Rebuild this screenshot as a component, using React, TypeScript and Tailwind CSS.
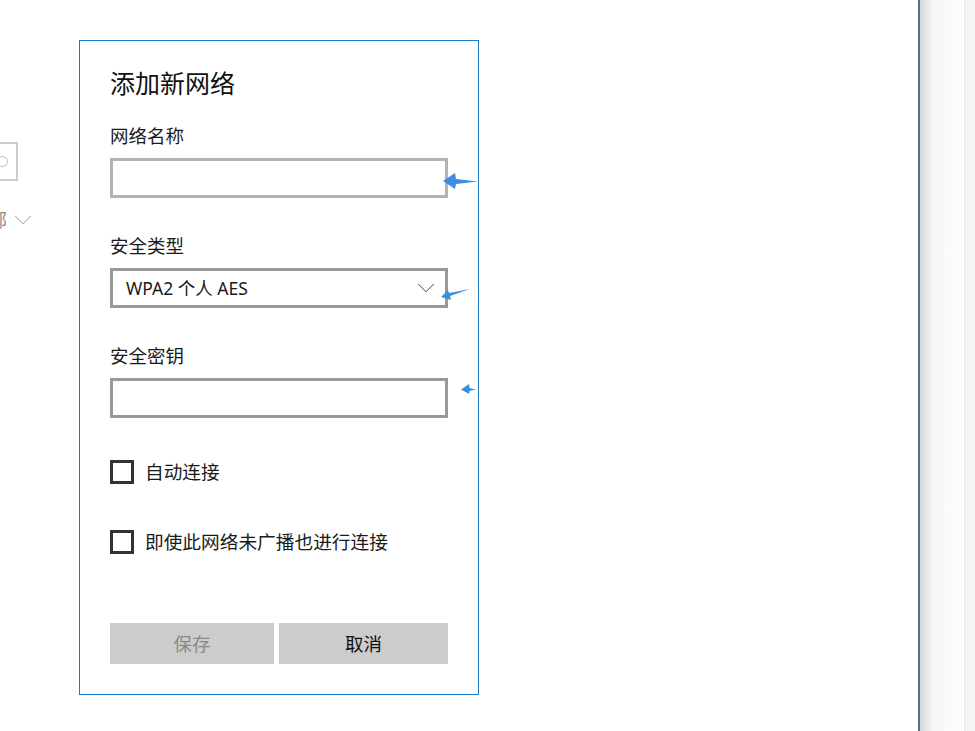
import { ChevronDown } from 'lucide-react';

const font = { fontFamily: '"Noto Sans", "Noto Sans CJK SC", sans-serif' };

function Field({ label, children, first }: { label: string; children: React.ReactNode; first?: boolean }) {
  return (
    <div className={first ? 'mt-[24px]' : 'mt-[36px]'}>
      <div className="h-[24px] text-[18.5px] leading-[24px] text-[#1a1a1a]">{label}</div>
      <div className="mt-[10px]">{children}</div>
    </div>
  );
}

function Check({ label, className }: { label: string; className: string }) {
  return (
    <label className={`flex h-[24px] items-center ${className}`}>
      <span className="box-border h-[24px] w-[24px] shrink-0 border-[3px] border-[#333333] bg-white" />
      <span className="ml-[11px] text-[18.7px] leading-[24px] text-[#1a1a1a]">{label}</span>
    </label>
  );
}

function Arrows() {
  return (
    <svg className="pointer-events-none absolute left-[436px] top-[170px]" width="50" height="230" viewBox="436 170 50 230">
      <path d="M443 181 L455 173 L456 179 L478 181.5 L456 184 L455 189 Z" fill="#3a8fe0" />
      <path d="M441 297 L448 290 L449 293 L470 289 L450 296 L451 300 Z" fill="#3a8fe0" />
      <path d="M461 389.5 L469 384 L469.5 388 L476 389.5 L469.5 391 L469 394 Z" fill="#3a8fe0" />
    </svg>
  );
}

export default function App() {
  return (
    <div className="relative flex h-[731px] w-[975px] overflow-hidden bg-white" style={font}>
      <div className="flex w-[918px] shrink-0">
        {/* clipped left column */}
        <div className="-ml-[28px] w-[70px] shrink-0 pt-[142px]">
          <div className="relative box-border h-[39px] w-[46px] border-2 border-[#cccccc]">
            <span className="absolute left-[23px] top-[12px] h-[11px] w-[11px] rounded-full border border-[#bbbbbb]" />
          </div>
          <div className="mt-[27px] flex h-[24px] items-center">
            <span className="ml-[-1px] shrink-0 whitespace-nowrap text-[18px] leading-[24px] text-[#8a8a8a]">全部</span>
            <ChevronDown className="ml-[1px] h-[30px] w-[30px] shrink-0 text-[#9a9a9a]" strokeWidth={0.8} />
          </div>
        </div>

        <div className="ml-[37px] mt-[40px] box-border h-[655px] w-[400px] shrink-0 border border-[#1f7ac4] bg-white pl-[30px] pt-[25px]">
          <div className="h-[34px] text-[25px] leading-[34px] text-[#111111]">添加新网络</div>

          <Field label="网络名称" first>
            <div className="box-border h-[40px] w-[338px] border-[3px] border-[#b3b3b3] bg-white" />
          </Field>

          <Field label="安全类型">
            <div className="box-border flex h-[40px] w-[338px] items-center justify-between border-[3px] border-[#999999] bg-white pl-[13px] pr-[4px]">
              <span className="text-[17.5px] leading-[24px] text-[#1a1a1a]">WPA2 个人 AES</span>
              <ChevronDown className="h-[30px] w-[30px] text-[#444444]" strokeWidth={0.8} />
            </div>
          </Field>

          <Field label="安全密钥">
            <div className="box-border h-[40px] w-[338px] border-[3px] border-[#999999] bg-white" />
          </Field>

          <Check label="自动连接" className="mt-[42px]" />
          <Check label="即使此网络未广播也进行连接" className="mt-[46px]" />

          <div className="mt-[69px] flex w-[338px] gap-[5px]">
            <button type="button" className="h-[41px] w-[164px] bg-[#cccccc] text-[18.5px] text-[#8a8a8a]">
              保存
            </button>
            <button type="button" className="h-[41px] w-[169px] bg-[#cccccc] text-[18.5px] text-[#111111]">
              取消
            </button>
          </div>
        </div>
      </div>

      {/* right pane edge */}
      <div className="w-[2px] shrink-0 bg-[#4a7398]" />
      <div className="w-[44px] shrink-0 bg-gradient-to-r from-[#d6d6d6] via-[#f6f6f6] via-30% to-white" />
      <div className="flex-1 border-l border-[#e6e7e8] bg-[#f3f4f5]" />

      <Arrows />
    </div>
  );
}
